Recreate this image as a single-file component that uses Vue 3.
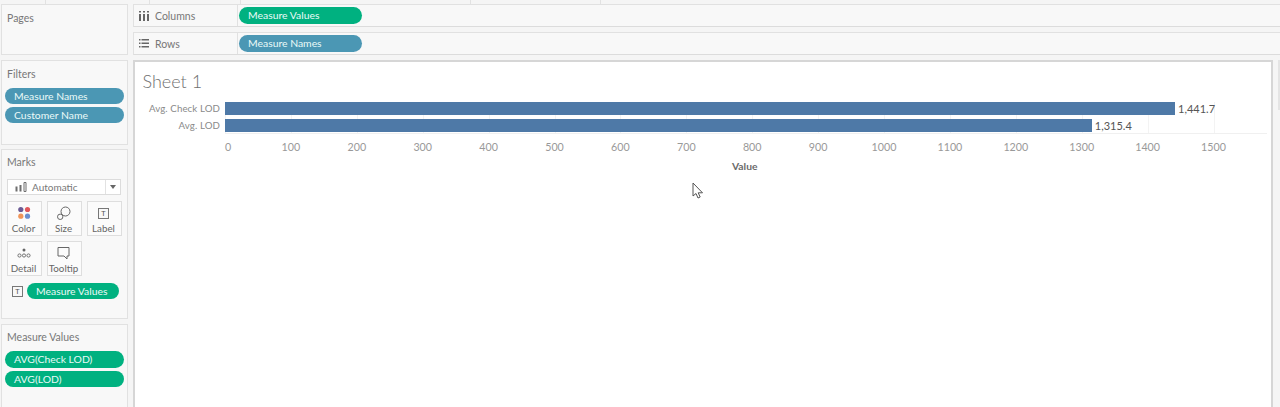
<script setup>
const scale = 0.659
const bars = [
  { name: 'Avg. Check LOD', value: 1441.7, label: '1,441.7' },
  { name: 'Avg. LOD', value: 1315.4, label: '1,315.4' }
]
const ticks = Array.from({ length: 16 }, (_, i) => i * 100)
const tickLeft = (t) => (t === 0 ? 3 : t * scale) + 'px'
const topTicks = [45, 149, 240, 470, 600]
</script>

<template>
  <div class="app">
    <div class="top-strip">
      <i v-for="t in topTicks" :key="t" class="top-tick" :style="{ left: t + 'px' }"></i>
    </div>
    <div class="main">
      <aside class="left">
        <section class="card pages"><h3>Pages</h3></section>
        <section class="card filters">
          <h3>Filters</h3>
          <div class="pill-stack">
            <div class="pill blue">Measure Names</div>
            <div class="pill blue">Customer Name</div>
          </div>
        </section>
        <section class="card marks">
          <h3>Marks</h3>
          <div class="dropdown">
            <svg class="auto-icon" width="12" height="10" viewBox="0 0 12 10">
              <path d="M0.500 4.500h2v5h-2zM4.500 3h2v6.500h-2z" fill="#6f6f6f" />
              <path d="M9 0.500h2v9H9z" fill="none" stroke="#6f6f6f" stroke-width="1" />
            </svg>
            <span class="auto-text">Automatic</span>
            <span class="caret-box"><i class="caret"></i></span>
          </div>
          <div class="mark-grid">
            <div class="mark-btn">
              <svg width="14" height="14" viewBox="0 0 14 14">
                <circle cx="3.800" cy="3.500" r="2.600" fill="#6b5b95" />
                <circle cx="10.500" cy="3.500" r="2.600" fill="#e0575b" />
                <circle cx="3.800" cy="10.200" r="2.600" fill="#f0955a" />
                <circle cx="10.500" cy="10.200" r="2.600" fill="#6c8fcf" />
              </svg>
              <span>Color</span>
            </div>
            <div class="mark-btn">
              <svg width="14" height="14" viewBox="0 0 14 14" fill="none" stroke="#666" stroke-width="1">
                <circle cx="8.500" cy="5.500" r="4.500" />
                <circle cx="3.200" cy="10.800" r="2.700" fill="#fbfbfb" />
              </svg>
              <span>Size</span>
            </div>
            <div class="mark-btn">
              <span class="t-box big">T</span>
              <span>Label</span>
            </div>
            <div class="mark-btn">
              <svg width="14" height="14" viewBox="0 0 14 14" fill="none" stroke="#666" stroke-width="0.900">
                <circle cx="7" cy="4" r="1.500" fill="#666" stroke="none" />
                <circle cx="2.500" cy="9.500" r="1.600" />
                <circle cx="7" cy="9.500" r="1.600" />
                <circle cx="11.500" cy="9.500" r="1.600" />
              </svg>
              <span>Detail</span>
            </div>
            <div class="mark-btn">
              <svg width="13" height="14" viewBox="0 0 13 14" fill="none" stroke="#666" stroke-width="1">
                <path d="M1 1.500h11v8.500h-2v3l-3-3H1z" />
              </svg>
              <span>Tooltip</span>
            </div>
          </div>
          <div class="mark-field">
            <span class="t-box">T</span>
            <div class="pill green">Measure Values</div>
          </div>
        </section>
        <section class="card measures">
          <h3>Measure Values</h3>
          <div class="pill-stack">
            <div class="pill green">AVG(Check LOD)</div>
            <div class="pill green">AVG(LOD)</div>
          </div>
        </section>
      </aside>

      <div class="right">
        <div class="shelf">
          <div class="shelf-label">
            <svg width="10" height="10" viewBox="0 0 10 10" fill="#666">
              <path d="M0 0h2v1.500H0zM4 0h2v1.500H4zM8 0h2v1.500H8zM0 3h2v7H0zM4 3h2v7H4zM8 3h2v7H8z" />
            </svg>
            <span>Columns</span>
          </div>
          <div class="pill green shelf-pill">Measure Values</div>
        </div>
        <div class="shelf">
          <div class="shelf-label">
            <svg width="10" height="9" viewBox="0 0 10 9" fill="#666">
              <path d="M0 0h1.500v1.500H0zM2.500 0H10v1.500H2.500zM0 3.500h1.500V5H0zM2.500 3.500H10V5H2.500zM0 7h1.500v1.500H0zM2.500 7H10v1.500H2.500z" />
            </svg>
            <span>Rows</span>
          </div>
          <div class="pill blue shelf-pill">Measure Names</div>
        </div>

        <div class="canvas-row">
          <section class="sheet">
            <h2 class="sheet-title">Sheet 1</h2>
            <div class="chart">
              <div class="grid-lines">
                <i v-for="t in ticks" :key="t" class="grid-line" :style="{ left: t * scale + 'px' }"></i>
              </div>
              <div v-for="b in bars" :key="b.name" class="bar-row">
                <div class="bar-name">{{ b.name }}</div>
                <div class="bar" :style="{ width: b.value * scale + 'px' }"></div>
                <div class="bar-value">{{ b.label }}</div>
              </div>
              <div class="axis">
                <span v-for="t in ticks" :key="t" class="tick" :style="{ left: tickLeft(t) }">{{ t }}</span>
              </div>
              <div class="axis-title">Value</div>
            </div>
            <svg class="cursor" width="12" height="18" viewBox="0 0 12 18">
              <path d="M1 1v13l3-2.500 2 4.500 2.200-1-2-4.200h4.300z" fill="#fff" stroke="#555" stroke-width="1" />
            </svg>
          </section>
          <div class="scroll-stub"></div>
        </div>
      </div>
    </div>
  </div>
</template>

<style>
html, body { margin: 0; background: #f5f5f5; }
</style>

<style scoped>
.app {
  width: 1280px;
  height: 407px;
  overflow: hidden;
  background: #f5f5f5;
  font-family: Lato, "Open Sans", sans-serif;
  font-size: 11px;
  color: #666;
  display: flex;
  flex-direction: column;
}
.top-strip { position: relative; height: 4px; flex: none; }
.top-tick { position: absolute; top: 0; width: 1px; height: 4px; background: #e2e2e2; }
.main { display: flex; flex: 1; min-height: 0; padding-left: 1px; gap: 4px; }

.left { width: 127px; flex: none; margin-right: 1px; display: flex; flex-direction: column; }
.card {
  background: #f8f8f8;
  border: 1px solid #e1e1e1;
  box-sizing: border-box;
  padding: 6px 3px 0;
}
.card h3 {
  margin: 0 0 0 2px;
  font-size: 10.500px;
  line-height: 14px;
  font-weight: 400;
  color: #777;
}
.pages { height: 51px; margin-bottom: 5px; }
.filters { height: 85px; margin-bottom: 4px; }
.marks { height: 170px; margin-bottom: 5px; padding-top: 5px; }
.measures { flex: 1; border-bottom: none; padding-top: 5px; }
.pill-stack { display: flex; flex-direction: column; gap: 3px; }
.filters .pill-stack { margin-top: 6.700px; }
.measures .pill-stack { margin-top: 7.300px; }

.pill {
  height: 16.400px;
  line-height: 16px;
  border-radius: 9px;
  color: #eafaf8;
  font-size: 10.400px;
  padding-left: 9px;
  box-sizing: border-box;
  white-space: nowrap;
}
.pill.green { background: #00b180; }
.pill.blue { background: #4b97b4; }

.dropdown {
  margin: 10px 3px 0 2px;
  height: 16px;
  background: #fff;
  border: 1px solid #dcdcdc;
  box-sizing: border-box;
  display: flex;
  align-items: center;
  padding-left: 7px;
  font-size: 10px;
  color: #777;
}
.auto-icon { flex: none; }
.auto-text { margin-left: 5px; flex: 1; }
.caret-box {
  width: 14px;
  height: 100%;
  border-left: 1px solid #e2e2e2;
  display: flex;
  align-items: center;
  justify-content: center;
  flex: none;
}
.caret {
  width: 0;
  height: 0;
  border-left: 3.500px solid transparent;
  border-right: 3.500px solid transparent;
  border-top: 4px solid #666;
}
.mark-grid {
  margin: 6px 0 0 2px;
  display: grid;
  grid-template-columns: repeat(3, 35px);
  grid-auto-rows: 35px;
  column-gap: 5px;
  row-gap: 5px;
}
.mark-btn {
  background: #fbfbfb;
  border: 1px solid #dedede;
  box-sizing: border-box;
  display: flex;
  flex-direction: column;
  align-items: center;
  justify-content: flex-start;
  padding: 4px 2px 0 0;
  font-size: 9.800px;
  line-height: 13px;
  color: #666;
  white-space: nowrap;
}
.mark-btn svg, .mark-btn .t-box { height: 14px; margin-bottom: 2px; flex: none; }
.t-box {
  display: inline-block;
  width: 11px;
  height: 11px;
  line-height: 9px;
  text-align: center;
  box-sizing: border-box;
  border: 1px solid #777;
  font-size: 8px;
  color: #555;
  font-family: "Liberation Mono", monospace;
  background: #f8f8f8;
}
.mark-btn .t-box.big { width: 11px; height: 11px; margin: 2px 0 3px; }
.mark-field { display: flex; align-items: center; margin: 7px 0 0 7px; gap: 4px; }
.mark-field .pill { width: 92px; }

.right { flex: 1; min-width: 0; display: flex; flex-direction: column; }
.shelf {
  height: 23px;
  flex: none;
  box-sizing: border-box;
  margin-bottom: 5px;
  border-top: 1px solid #e1e1e1;
  border-bottom: 1px solid #dcdcdc;
  border-left: 1px solid #e1e1e1;
  background: #f8f8f8;
  display: flex;
  align-items: center;
}
.shelf-label {
  width: 104px;
  height: 100%;
  flex: none;
  border-right: 1px solid #e1e1e1;
  display: flex;
  align-items: center;
  box-sizing: border-box;
  padding-left: 5px;
  gap: 6px;
  font-size: 10.500px;
  line-height: 12px;
  color: #777;
}
.shelf-pill { width: 123px; margin-left: 1px; }

.canvas-row { flex: 1; min-height: 0; display: flex; gap: 5px; }
.sheet {
  position: relative;
  width: 1140px;
  flex: none;
  background: #fff;
  border: 2px solid #d6d6d6;
  border-bottom: none;
  box-sizing: border-box;
}
.scroll-stub { width: 2px; height: 50px; background: #e4e4e4; }
.sheet-title {
  margin: 9px 0 0 7.500px;
  font-size: 18px;
  line-height: 20px;
  font-weight: 300;
  color: #707070;
}
.chart { position: relative; margin-top: 11px; }
.grid-lines {
  position: absolute;
  left: 90px;
  top: 0;
  width: 1042px;
  height: 31px;
  border-bottom: 1px solid #f0f0f0;
}
.grid-line { position: absolute; top: 0; bottom: 0; width: 1px; background: #f3f3f3; }
.bar-row { position: relative; display: flex; align-items: center; height: 13px; margin-bottom: 4px; }
.bar-name {
  width: 85px;
  margin-right: 5px;
  flex: none;
  text-align: right;
  font-size: 9.700px;
  line-height: 13px;
  letter-spacing: 0.100px;
  color: #8a8a8a;
  white-space: nowrap;
}
.bar { height: 13px; background: #4e79a7; flex: none; }
.bar-value { margin-left: 3px; font-size: 11px; color: #555; line-height: 13px; }
.axis { position: relative; height: 20px; margin: 2px 0 0 90px; }
.tick {
  position: absolute;
  top: 4px;
  transform: translateX(-50%);
  font-size: 10.700px;
  line-height: 14px;
  color: #999;
}
.axis-title {
  margin: 4px 0 0 597px;
  font-size: 10.300px;
  line-height: 12px;
  font-weight: 700;
  color: #6a6a6a;
}
.cursor { position: absolute; left: 557px; top: 120px; }
</style>
